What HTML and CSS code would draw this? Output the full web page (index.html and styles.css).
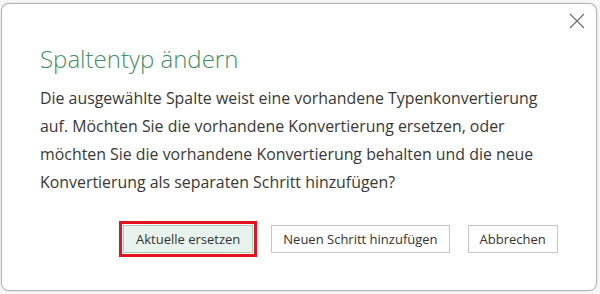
FILE: index.html
```html
<!DOCTYPE html>
<html lang="de">
<head>
<meta charset="utf-8">
<link rel="stylesheet" href="styles.css">
</head>
<body>
<div class="dialog">
  <div class="topbar">
    <button class="close" aria-label="Schließen">
      <svg width="16" height="16" viewBox="0 0 16 16"><path d="M1 1 L15 15 M15 1 L1 15" stroke="#6a6a6a" stroke-width="1.1" fill="none"/></svg>
    </button>
  </div>
  <h1 class="title">Spaltentyp ändern</h1>
  <p class="message">Die ausgewählte Spalte weist eine vorhandene Typenkonvertierung<br>auf. Möchten Sie die vorhandene Konvertierung ersetzen, oder<br>möchten Sie die vorhandene Konvertierung behalten und die neue<br>Konvertierung als separaten Schritt hinzufügen?</p>
  <div class="actions">
    <button class="btn primary">Aktuelle ersetzen</button>
    <button class="btn">Neuen Schritt hinzufügen</button>
    <button class="btn">Abbrechen</button>
  </div>
</div>
</body>
</html>
```
FILE: styles.css
```css
html, body {
  margin: 0;
  padding: 0;
  background: #f7f7f7;
}
body {
  width: 600px;
  height: 294px;
  overflow: hidden;
  font-family: "Open Sans", "Noto Sans", sans-serif;
}
.dialog {
  box-sizing: border-box;
  margin: 3px 0 0 1px;
  width: 596px;
  height: 288px;
  background: #ffffff;
  border: 1px solid #b4b4b4;
  border-radius: 8px;
  box-shadow: 0 0 2px rgba(0,0,0,0.18);
  padding: 0 0 0 38px;
  display: flex;
  flex-direction: column;
}
.topbar {
  display: flex;
  justify-content: flex-end;
  padding: 9px 11px 0 0;
  height: 24px;
}
.close {
  border: 0;
  background: none;
  padding: 0;
  width: 16px;
  height: 16px;
  display: flex;
}
.title {
  margin: 6px 0 0 0;
  font-weight: 300;
  font-size: 24px;
  line-height: 32px;
  color: #3f8f63;
}
.message {
  margin: 9px 0 0 0;
  font-size: 15.9px;
  line-height: 28px;
  color: #383838;
}
.actions {
  display: flex;
  gap: 18px;
  padding-left: 83px;
  margin-top: 29px;
}
.btn {
  font-family: "Open Sans", "Noto Sans", sans-serif;
  font-size: 13px;
  height: 28px;
  padding: 0 11px;
  background: #ffffff;
  border: 1px solid #c6c6c6;
  color: #333333;
}
.btn.primary {
  padding: 0 12px;
  background: #e9f3ed;
  border-color: #a9cdb6;
  outline: 3px solid #e3141f;
  outline-offset: 1px;
}
```
